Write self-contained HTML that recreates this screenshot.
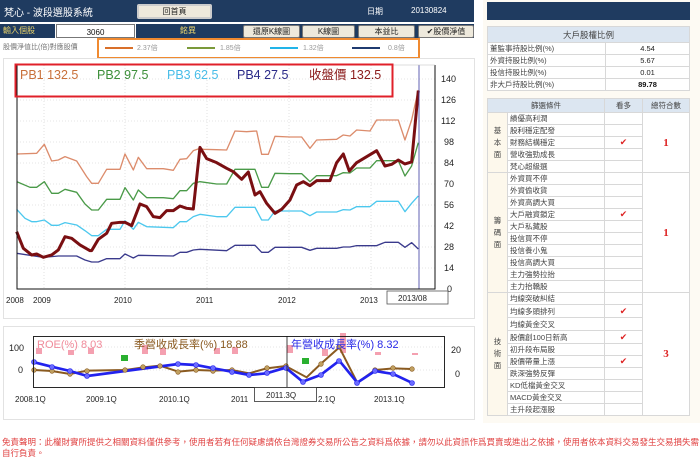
<!DOCTYPE html>
<html><head><meta charset="utf-8"><style>
*{margin:0;padding:0;box-sizing:border-box}
body{width:700px;height:467px;background:#fff;font-family:"Liberation Sans","Noto Sans CJK TC",sans-serif;position:relative;overflow:hidden;font-size:8px;color:#333}
.a{position:absolute}
.btn{position:absolute;background:#eee9dc;border:1px solid #777;border-radius:2px;font-size:8px;text-align:center;line-height:12px;color:#222}
table{border-collapse:collapse;position:absolute}
td{border:1px solid #d8d8d8;font-size:7.5px;padding:0 2px;color:#444;white-space:nowrap}
.ck{color:#d22;text-align:center;font-size:9px}
.num{color:#d22;text-align:center;font-size:11px;font-weight:bold;font-family:"Liberation Serif",serif}
</style></head><body>
<div class="a" style="left:483px;top:0;width:217px;height:423px;background:#fdfaf3"></div>
<div class="a" style="left:0;top:0;width:474px;height:22px;background:#1f3b60"></div>
<div class="a" style="left:4px;top:4px;color:#fff;font-size:10px">梵心 - 波段選股系統</div>
<div class="btn" style="left:137px;top:4px;width:75px;height:15px;border:2px solid #ccc;line-height:11px">回首頁</div>
<div class="a" style="left:367px;top:6px;color:#fff;font-size:8px">日期</div>
<div class="a" style="left:411px;top:6px;color:#fff;font-size:8px">20130824</div>
<div class="a" style="left:0;top:24px;width:55px;height:14px;background:#1f3b60;color:#e8d26a;font-size:8px;line-height:14px;padding-left:3px">輸入個股</div>
<div class="a" style="left:56px;top:24px;width:79px;height:14px;border:1px solid #777;background:#fff;font-size:8px;line-height:16px;text-align:center;color:#111">3060</div>
<div class="a" style="left:136px;top:24px;width:104px;height:14px;background:#1f3b60;color:#e8d26a;font-size:8px;line-height:14px;text-align:center">銘異</div>
<div class="a" style="left:240px;top:24px;width:234px;height:14px;background:#1f3b60"></div>
<div class="btn" style="left:243px;top:25px;width:57px;height:13px">還原K線圖</div>
<div class="btn" style="left:302px;top:25px;width:53px;height:13px">K線圖</div>
<div class="btn" style="left:358px;top:25px;width:57px;height:13px">本益比</div>
<div class="btn" style="left:418px;top:25px;width:56px;height:13px">✔股價淨值</div>
<div class="a" style="left:3px;top:42px;font-size:7px;color:#777">股價淨值比(倍)對應股價</div>
<div class="a" style="left:97px;top:38px;width:323px;height:21px;border:2px solid #f08a30"></div>
<div class="a" style="left:105px;top:47px;width:28px;height:2px;background:#d9702a"></div><div class="a" style="left:137px;top:43px;font-size:7px;color:#999">2.37倍</div>
<div class="a" style="left:187px;top:47px;width:28px;height:2px;background:#7b9a3a"></div><div class="a" style="left:220px;top:43px;font-size:7px;color:#999">1.85倍</div>
<div class="a" style="left:270px;top:47px;width:28px;height:2px;background:#22b4e8"></div><div class="a" style="left:303px;top:43px;font-size:7px;color:#999">1.32倍</div>
<div class="a" style="left:352px;top:47px;width:28px;height:2px;background:#1f3b70"></div><div class="a" style="left:388px;top:43px;font-size:7px;color:#999">0.8倍</div>
<div class="a" style="left:3px;top:58px;width:472px;height:261px;border:1px solid #e2e2e2"></div>
<svg class="a" style="left:0;top:0" width="480" height="320" viewBox="0 0 480 320">
<g stroke="#ccc" stroke-dasharray="1,2" stroke-width="0.6">
<line x1="17" y1="268" x2="435" y2="268"/><line x1="17" y1="247" x2="435" y2="247"/><line x1="17" y1="226" x2="435" y2="226"/><line x1="17" y1="205" x2="435" y2="205"/><line x1="17" y1="184" x2="435" y2="184"/><line x1="17" y1="163" x2="435" y2="163"/><line x1="17" y1="142" x2="435" y2="142"/><line x1="17" y1="121" x2="435" y2="121"/><line x1="17" y1="100" x2="435" y2="100"/><line x1="17" y1="79" x2="435" y2="79"/>
<line x1="44" y1="65" x2="44" y2="289"/><line x1="125" y1="65" x2="125" y2="289"/><line x1="207" y1="65" x2="207" y2="289"/><line x1="289" y1="65" x2="289" y2="289"/><line x1="371" y1="65" x2="371" y2="289"/>
</g>
<g transform="translate(0,60) scale(0.3333)" fill="none" stroke-linejoin="round">
<polyline stroke="#dc8c6c" stroke-width="4" points="50,282 110,280 133,253 155,303 175,300 195,290 230,303 260,350 275,370 295,370 320,328 360,328 375,282 400,330 415,292 440,326 490,326 520,331 540,298 560,296 580,272 600,265 610,268 650,269 680,270 705,213 740,215 770,213 785,283 805,283 825,229 870,231 905,231 930,265 950,240 1010,238 1030,225 1050,228 1070,210 1110,213 1130,180 1195,180 1215,240 1235,180 1255,90"/>
<polyline stroke="#4a9a48" stroke-width="4" points="50,365 90,382 110,382 133,365 155,400 175,400 195,388 230,397 255,432 275,450 295,450 320,418 360,418 375,383 400,420 415,390 440,413 490,413 520,416 540,392 560,392 580,370 600,365 650,372 680,372 705,328 740,328 765,328 785,382 805,382 825,340 870,341 905,341 930,365 950,347 1010,347 1030,338 1050,339 1070,324 1110,324 1130,302 1195,302 1215,348 1235,318 1255,248"/>
<polyline stroke="#4cc8ee" stroke-width="4" points="50,448 75,475 95,485 110,485 133,480 155,496 175,496 195,488 230,495 255,512 275,527 295,527 320,508 360,508 375,482 400,508 415,487 440,500 490,502 520,503 540,485 560,485 580,470 600,463 650,470 680,470 705,442 765,442 785,480 805,480 825,453 870,453 905,453 930,467 950,456 1010,456 1030,449 1050,450 1070,440 1110,440 1130,424 1195,424 1215,455 1235,430 1255,408"/>
<polyline stroke="#3a3a8c" stroke-width="4" points="50,580 130,592 155,590 175,588 230,588 255,600 275,606 295,606 320,596 360,596 375,582 400,594 415,586 520,588 540,577 560,577 580,570 600,568 680,572 705,556 765,556 785,577 805,577 825,562 905,562 930,571 950,565 1010,565 1030,561 1050,561 1070,557 1130,557 1155,547 1195,547 1215,562 1235,548 1255,567"/>
<polyline stroke="#7a0f12" stroke-width="9" points="50,515 70,565 95,585 110,582 130,592 155,585 175,570 195,530 215,535 240,555 270,572 275,572 295,538 320,520 335,490 360,487 375,487 395,497 420,432 440,440 460,470 480,473 500,452 520,452 540,438 560,445 580,447 600,262 620,296 650,308 680,325 700,335 725,358 745,336 765,405 780,395 800,430 825,460 845,448 870,420 890,375 910,365 930,377 950,362 990,362 1010,308 1030,282 1048,333 1070,308 1100,290 1130,272 1155,318 1175,313 1195,300 1215,312 1235,306 1255,92"/>
</g>
<line x1="419" y1="65" x2="419" y2="289" stroke="#3a3aa0" stroke-width="0.8"/>
<polyline points="17,65 17,289 435,289 435,65" fill="none" stroke="#111" stroke-width="1"/>
<line x1="17" y1="65" x2="435" y2="65" stroke="#bbb" stroke-width="0.6"/>
<g font-size="9" fill="#222" font-family="Liberation Sans">
<text x="441" y="82">140</text><text x="441" y="103">126</text><text x="441" y="124">112</text><text x="444" y="145">98</text><text x="444" y="166">84</text><text x="444" y="187">70</text><text x="444" y="208">56</text><text x="444" y="229">42</text><text x="444" y="250">28</text><text x="444" y="271">14</text><text x="447" y="292">0</text>
<text x="6" y="303" font-size="8">2008</text><text x="33" y="303" font-size="8">2009</text><text x="114" y="303" font-size="8">2010</text><text x="196" y="303" font-size="8">2011</text><text x="278" y="303" font-size="8">2012</text><text x="360" y="303" font-size="8">2013</text>
</g>
<rect x="387" y="291" width="61" height="13" fill="#fff" stroke="#555" stroke-width="0.8"/>
<text x="398" y="301" font-size="8" fill="#222">2013/08</text>
<rect x="15.5" y="64.5" width="377" height="32" fill="none" stroke="#e0202a" stroke-width="2"/>
<g font-size="12.5" font-family="Liberation Sans, Noto Sans CJK TC, sans-serif">
<text x="20" y="79" fill="#c8703a">PB1 132.5</text><text x="97" y="79" fill="#3d8f3a">PB2 97.5</text><text x="167" y="79" fill="#48bde8">PB3 62.5</text><text x="237" y="79" fill="#2a2a88">PB4 27.5</text><text x="309" y="79" fill="#8a1a1a">收盤價 132.5</text>
</g>
</svg>
<div class="a" style="left:3px;top:326px;width:472px;height:94px;border:1px solid #e2e2e2"></div>
<svg class="a" style="left:0;top:320px" width="480" height="100" viewBox="0 0 480 100">
<g stroke="#ccc" stroke-dasharray="1,2" stroke-width="0.6"><line x1="33" y1="27" x2="445" y2="27"/><line x1="33" y1="50" x2="445" y2="50"/></g>
<g fill="#f4a0b0"><rect x="36" y="28" width="6" height="6"/><rect x="68" y="30" width="6" height="5"/><rect x="88" y="28" width="6" height="6"/><rect x="142" y="25" width="6" height="9"/><rect x="160" y="28" width="6" height="7"/><rect x="214" y="28" width="6" height="6"/><rect x="232" y="27" width="6" height="7"/><rect x="287" y="25" width="6" height="8"/><rect x="322" y="29" width="6" height="7"/><rect x="340" y="13" width="6" height="20"/><rect x="375" y="32" width="6" height="3"/><rect x="412" y="33" width="6" height="2"/></g>
<g fill="#2ab030"><rect x="121" y="35" width="7" height="6"/><rect x="302" y="38" width="7" height="6"/></g>
<g transform="scale(0.3333)" fill="none">
<polyline stroke="#8a5a20" stroke-width="6" points="103,150 155,153 210,162 262,152 375,150 430,142 480,137 535,155 588,150 640,152 695,150 748,160 800,145 857,138 920,172 962,132 1018,82 1072,188 1125,150 1180,145 1235,147"/>
<polyline stroke="#2222ee" stroke-width="8" points="103,127 155,140 210,153 262,168 535,132 588,135 640,145 695,155 748,165 800,160 857,143 908,185 962,165 1018,122 1072,188 1125,153 1180,162 1235,188"/>
</g>
<g fill="#c0a060" stroke="#8a5a20" stroke-width="0.6"><circle cx="34" cy="50" r="2.3"/><circle cx="52" cy="51" r="2.3"/><circle cx="70" cy="54" r="2.3"/><circle cx="87" cy="51" r="2.3"/><circle cx="125" cy="50" r="2.3"/><circle cx="143" cy="47" r="2.3"/><circle cx="160" cy="46" r="2.3"/><circle cx="178" cy="52" r="2.3"/><circle cx="196" cy="50" r="2.3"/><circle cx="213" cy="51" r="2.3"/><circle cx="232" cy="50" r="2.3"/><circle cx="267" cy="48" r="2.3"/><circle cx="286" cy="46" r="2.3"/><circle cx="321" cy="44" r="2.3"/><circle cx="339" cy="27" r="2.3"/><circle cx="375" cy="50" r="2.3"/><circle cx="393" cy="48" r="2.3"/><circle cx="412" cy="49" r="2.3"/></g>
<g fill="#6a6aff" stroke="#2222ee" stroke-width="0.6"><circle cx="34" cy="42" r="2.5"/><circle cx="52" cy="47" r="2.5"/><circle cx="70" cy="51" r="2.5"/><circle cx="87" cy="56" r="2.5"/><circle cx="178" cy="44" r="2.5"/><circle cx="196" cy="45" r="2.5"/><circle cx="213" cy="48" r="2.5"/><circle cx="232" cy="52" r="2.5"/><circle cx="249" cy="55" r="2.5"/><circle cx="267" cy="53" r="2.5"/><circle cx="286" cy="48" r="2.5"/><circle cx="303" cy="62" r="2.5"/><circle cx="321" cy="55" r="2.5"/><circle cx="339" cy="41" r="2.5"/><circle cx="357" cy="63" r="2.5"/><circle cx="375" cy="51" r="2.5"/><circle cx="393" cy="54" r="2.5"/><circle cx="412" cy="63" r="2.5"/></g>
<rect x="33.5" y="16.5" width="411" height="51" fill="none" stroke="#111" stroke-width="0.9"/>
<line x1="287" y1="16" x2="287" y2="68" stroke="#111" stroke-width="0.8"/>
<g font-size="9" fill="#222"><text x="9" y="31">100</text><text x="18" y="53">0</text><text x="451" y="33">20</text><text x="455" y="57">0</text>
<g font-size="8"><text x="15" y="82">2008.1Q</text><text x="86" y="82">2009.1Q</text><text x="159" y="82">2010.1Q</text><text x="231" y="82">2011</text><text x="318" y="82">2.1Q</text><text x="374" y="82">2013.1Q</text></g></g>
<rect x="254.5" y="67.5" width="62" height="14" fill="#fff" stroke="#333" stroke-width="0.8"/>
<text x="266" y="78" font-size="8" fill="#222">2011.3Q</text>
<g font-size="11" font-family="Liberation Sans, Noto Sans CJK TC, sans-serif"><text x="37" y="28" fill="#f08a9a">ROE(%) 8.03</text><text x="134" y="28" fill="#8a5a20">季營收成長率(%) 18.88</text><text x="291" y="28" fill="#2a2ae8">年營收成長率(%) 8.32</text></g>
</svg>
<div class="a" style="left:2px;top:437px;width:698px;font-size:8.5px;line-height:11px;color:#e04040">免責聲明：此權財實所提供之相關資料僅供參考，使用者若有任何疑慮請依台灣證券交易所公告之資料爲依據，請勿以此資訊作爲買賣或進出之依據，使用者依本資料交易發生交易損失需自行負責。</div>
<div class="a" style="left:487px;top:2px;width:203px;height:18px;background:#1f3b60"></div>
<table style="left:487px;top:26px;width:203px;background:#fff">
<tr style="height:16px;background:#dce6f1"><td colspan="2" style="text-align:center;font-size:8.5px">大戶股權比例</td></tr>
<tr style="height:11.5px"><td style="width:118px">董監事持股比例(%)</td><td style="text-align:center;color:#222">4.54</td></tr>
<tr style="height:11.5px"><td>外資持股比例(%)</td><td style="text-align:center;color:#222">5.67</td></tr>
<tr style="height:11.5px"><td>投信持股比例(%)</td><td style="text-align:center;color:#222">0.01</td></tr>
<tr style="height:11.5px"><td>非大戶持股比例(%)</td><td style="text-align:center;color:#111;font-weight:bold">89.78</td></tr>
</table>
<table style="left:487px;top:98px;width:203px;background:#fff">
<tr style="height:14px;background:#dce6f1"><td colspan="2" style="text-align:center">篩選條件</td><td style="text-align:center;width:38px">看多</td><td style="text-align:center;width:47px">總符合數</td></tr>
<tr style="height:11.4px"><td rowspan="5" style="width:20px;background:#fdf8ec;text-align:center;line-height:12px;white-space:normal">基<br>本<br>面</td><td>績優高利潤</td><td></td><td rowspan="5" class="num">1</td></tr>
<tr style="height:11.4px"><td>股利穩定配發</td><td></td></tr>
<tr style="height:11.4px"><td>財務結構穩定</td><td class="ck">✔</td></tr>
<tr style="height:11.4px"><td>營收強勁成長</td><td></td></tr>
<tr style="height:11.4px"><td>梵心超級選</td><td></td></tr>
<tr style="height:12px"><td rowspan="10" style="background:#fdf8ec;text-align:center;line-height:12px;white-space:normal">籌<br>碼<br>面</td><td>外資買不停</td><td></td><td rowspan="10" class="num">1</td></tr>
<tr style="height:12px"><td>外資偷收貨</td><td></td></tr>
<tr style="height:12px"><td>外資高調大買</td><td></td></tr>
<tr style="height:12px"><td>大戶融資鎖定</td><td class="ck">✔</td></tr>
<tr style="height:12px"><td>大戶私藏股</td><td></td></tr>
<tr style="height:12px"><td>投信買不停</td><td></td></tr>
<tr style="height:12px"><td>投信養小鬼</td><td></td></tr>
<tr style="height:12px"><td>投信高調大買</td><td></td></tr>
<tr style="height:12px"><td>主力強勢拉抬</td><td></td></tr>
<tr style="height:12px"><td>主力抬轎股</td><td></td></tr>
<tr style="height:12px"><td rowspan="10" style="background:#fdf8ec;text-align:center;line-height:12px;white-space:normal">技<br>術<br>面</td><td>均線突破糾結</td><td></td><td rowspan="10" class="num">3</td></tr>
<tr style="height:13px"><td>均線多頭排列</td><td class="ck">✔</td></tr>
<tr style="height:13px"><td>均線黃金交叉</td><td></td></tr>
<tr style="height:13px"><td>股價創100日新高</td><td class="ck">✔</td></tr>
<tr style="height:12px"><td>初升段布局股</td><td></td></tr>
<tr style="height:12px"><td>股價帶量上漲</td><td class="ck">✔</td></tr>
<tr style="height:12px"><td>跌深強勢反彈</td><td></td></tr>
<tr style="height:12px"><td>KD低檔黃金交叉</td><td></td></tr>
<tr style="height:12px"><td>MACD黃金交叉</td><td></td></tr>
<tr style="height:12px"><td>主升段起漲股</td><td></td></tr>
</table>
</body></html>
